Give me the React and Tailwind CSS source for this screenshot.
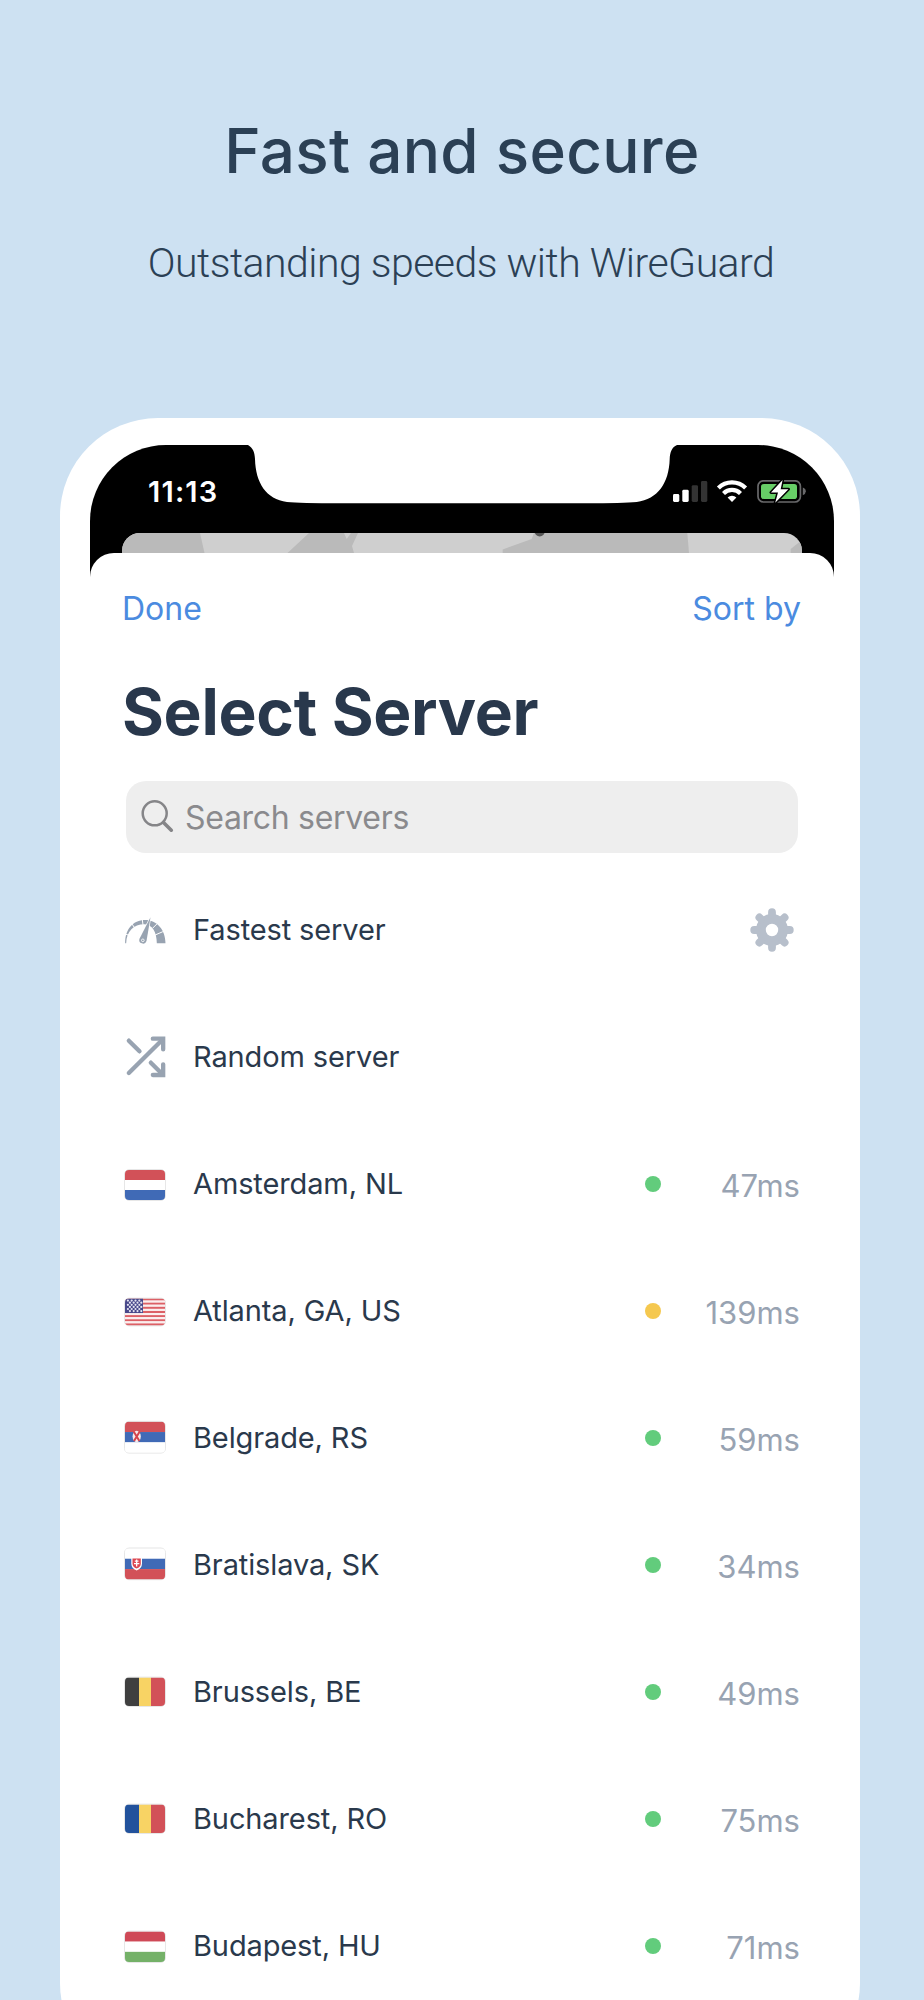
const servers = [
  { name: "Amsterdam, NL", flag: "nl", ping: 47 },
  { name: "Atlanta, GA, US", flag: "us", ping: 139 },
  { name: "Belgrade, RS", flag: "rs", ping: 59 },
  { name: "Bratislava, SK", flag: "sk", ping: 34 },
  { name: "Brussels, BE", flag: "be", ping: 49 },
  { name: "Bucharest, RO", flag: "ro", ping: 75 },
  { name: "Budapest, HU", flag: "hu", ping: 71 },
];

const flags = {
  nl: { y: 3, h: 30, rows: ["#d25158", "#ffffff", "#406ab6"] },
  us: { y: 4.5, h: 27, rows: [] },
  rs: { y: 0.7, h: 31, rows: ["#d25158", "#406ab6", "#ffffff"] },
  sk: { y: 0.4, h: 31, rows: ["#ffffff", "#406ab6", "#d25158"] },
  be: { y: 2.5, h: 28.5, cols: ["#3f3f3f", "#f8d364", "#d25158"] },
  ro: { y: 2.5, h: 28.5, cols: ["#22529c", "#f8d364", "#d25158"] },
  hu: { y: 2.5, h: 30.5, rows: ["#cf4957", "#ffffff", "#74b168"] },
};

const Flag = ({ code }) => {
  const { y, h, rows, cols } = flags[code];
  const clip = `flag-${code}`;
  return (
    <svg viewBox="0 0 40 34" className="w-10 h-[34px] shrink-0 overflow-visible">
      <clipPath id={clip}>
        <rect x="0" y={y} width="40" height={h} rx="4" />
      </clipPath>
      <rect x="-0.3" y={y - 0.3} width="40.6" height={h + 0.6} rx="4.3" fill="#fff" stroke="#dedede" strokeWidth="0.9" />
      <g clipPath={`url(#${clip})`}>
        {rows?.map((color, i) => (
          <rect key={i} x="0" y={y + (i * h) / 3} width="40" height={h / 3} fill={color} />
        ))}
        {cols?.map((color, i) => (
          <rect key={i} x={[0, 14, 26][i]} y={y} width={[14, 12, 14][i]} height={h} fill={color} />
        ))}
        {code === "us" && (
          <>
            {[...Array(13)].map((_, i) => (
              <rect key={i} x="0" y={y + (i * h) / 13} width="40" height={h / 13} fill={i % 2 ? "#fbeeee" : "#dc6066"} />
            ))}
            <rect x="0" y={y} width="18" height={(h * 7) / 13} fill="#48488a" />
            {[...Array(6)].map((_, r) =>
              [...Array(4)].map((_, c) => (
                <circle key={`${r}-${c}`} cx={(r % 2 ? 4.9 : 2.9) + c * 3.8} cy={y + 2.1 + r * 2.1} r="1.1" fill="#e4e4f0" />
              ))
            )}
          </>
        )}
      </g>
      {code === "rs" && (
        <g>
          <ellipse cx="11.7" cy="15.5" rx="4.1" ry="5.8" fill="#f8eaea" />
          <path d="M8.8 10.8L14.4 20M14.6 10.8L9 20" stroke="#d6434c" strokeWidth="2" />
        </g>
      )}
      {code === "sk" && (
        <g>
          <path d="M6.3 9.6H17V15.5Q17 20.4 11.6 22.6Q6.3 20.4 6.3 15.5Z" fill="#fff" />
          <path d="M7.5 10.4H15.8V15.4Q15.8 19 11.6 20.6Q7.5 19 7.5 15.4Z" fill="#dc4650" />
          <path d="M11.65 11.5V18.5M9.8 13.2H13.5M9 15.6H14.3" stroke="#fff" strokeWidth="1.3" />
        </g>
      )}
    </svg>
  );
};

const GaugeIcon = () => (
  <svg viewBox="46.5 78 120 84" className="w-10 h-7 shrink-0 overflow-visible">
    <path d="M47 160C46 118 71 90 106 90C143 90 168 120 168 160H142C142 126 128 103 104 103C73 103 51 124 50 160Z" fill="#98a3b1" />
    <path d="M45 131L58 136M66 100L75 113M98 86L101 108M147 97L129 115M160 125L137 135" stroke="#fff" strokeWidth="3" />
    <path d="M123 82L111 153A11 11 0 1 1 90 146Z" fill="#98a3b1" stroke="#fff" strokeWidth="4" strokeLinejoin="round" paintOrder="stroke" />
    <circle cx="100" cy="151" r="4" fill="#98a3b1" stroke="#fff" strokeWidth="2.5" />
  </svg>
);

const ShuffleIcon = () => (
  <svg viewBox="46.5 438 120 126" className="w-10 h-[42px] shrink-0 overflow-visible">
    <g fill="none" stroke="#98a3b1" strokeWidth="13" strokeLinecap="round">
      <path d="M58 452L90 484M58 549L160 448M124 518L158 552" />
      <path d="M130 446H161V478M130 555H161V523" />
    </g>
  </svg>
);

const GearIcon = () => (
  <svg viewBox="-22 -22 44 44" className="w-11 h-11 mr-[6px]">
    <circle r="11.1" fill="none" stroke="#b7bfcb" strokeWidth="9.8" />
    <path
      d="M0-17.8V-15M0 17.8V15M-17.8 0H-15M17.8 0H15M-12.6-12.6L-11-11M12.6-12.6L11-11M-12.6 12.6L-11 11M12.6 12.6L11 11"
      stroke="#b7bfcb"
      strokeWidth="7.8"
      strokeLinecap="round"
    />
  </svg>
);

const SearchIcon = () => (
  <svg viewBox="0 0 34 34" className="w-[34px] h-[34px]" fill="none" stroke="#858588" strokeLinecap="round">
    <circle cx="13.7" cy="13.3" r="12" strokeWidth="2.5" />
    <path d="M22.5 22.5L30.3 30.2" strokeWidth="3.6" />
  </svg>
);

const StatusIcons = () => (
  <svg viewBox="673 480 134 23" className="w-[134px] h-[23px]">
    <rect x="673" y="494" width="6.3" height="8" rx="1.4" fill="#fff" />
    <rect x="682.3" y="489.8" width="6.4" height="12.2" rx="1.4" fill="#fff" />
    <rect x="691.7" y="485.2" width="6.3" height="16.8" rx="1.4" fill="#333" />
    <rect x="701" y="481" width="6.3" height="21" rx="1.4" fill="#333" />
    {/* wifi */}
    <g fill="none" stroke="#fff" strokeWidth="4.2">
      <path d="M718.4 488A19.2 19.2 0 0 1 745.6 488" />
      <path d="M723.5 493.4A12 12 0 0 1 740.5 493.4" />
    </g>
    <path d="M727.6 497.6A6.4 6.4 0 0 1 736.4 497.6L732 502Z" fill="#fff" />
    {/* battery */}
    <rect x="758" y="480.8" width="42.4" height="21.2" rx="5.5" fill="none" stroke="#69696b" strokeWidth="1.7" />
    <path d="M802.8 487.5Q805.8 488.6 805.8 491.3T802.8 495.2Z" fill="#69696b" />
    <rect x="761" y="484" width="36" height="15" rx="2.8" fill="#67ce67" />
    <path d="M782.6 480L771 492.4H778L775.2 502.8L788.4 489.2H780.7Z" fill="#fff" stroke="#000" strokeWidth="3" strokeLinejoin="round" paintOrder="stroke" />
  </svg>
);

const MapStrip = () => (
  <svg viewBox="0 0 680 20" className="block w-[680px] h-5">
    <rect width="680" height="20" fill="#cfcfcf" />
    <g fill="#bababa">
      <path d="M0 0H78L82.5 20H0Z" />
      <path d="M187 0H222L224.7 6L229 0H236L230 13L232 20H165.5Z" />
      <path d="M412 0H565.3L567 20H380.7V16.5L409.7 6Z" />
      <path d="M680 7L668.7 16V20H680Z" />
    </g>
    <circle cx="417.7" cy="-1.5" r="5" fill="#555" />
  </svg>
);

const Row = ({ icon, label, children }) => (
  <li className="flex items-center h-[127px] pl-[35px] pr-[34px]">
    {icon}
    <span className="ml-[28px] flex-1 text-[29px] tracking-[-0.12px] text-[#2a394c]">{label}</span>
    {children}
  </li>
);

const App = () => {
  return (
    <div className="w-[924px] h-[2000px] overflow-hidden bg-[#cde1f2] font-['Inter',sans-serif]">
      <header className="h-[418px] pt-[106px] text-center text-[#2b4055]">
        <h1 className="text-[62px] leading-[90px] font-medium tracking-[0.3px]">Fast and secure</h1>
        <p className="mt-[37px] pr-[2px] text-[41px] leading-[60px] font-light tracking-[-0.53px] font-['Roboto',sans-serif]">
          Outstanding speeds with WireGuard
        </p>
      </header>

      <div className="ml-[60px] w-[800px] h-[1663px] rounded-[98px] bg-white pl-[30px] pr-[26px] pt-[27px]">
        <div className="rounded-t-[76px] overflow-hidden bg-[linear-gradient(#000_132px,#fff_132px)]">
          <div className="relative flex items-center justify-between h-[88px] pl-[58px] pr-[27px] pt-[5px]">
            <svg viewBox="0 0 744 59" className="absolute left-0 top-0 w-[744px] h-[59px]">
              <path
                d="M158 0C163 3 164.6 7 165 14C165.6 38 176 54 197 57Q210 58.2 250 58.3H496Q533 58.2 546.7 57C568 54 579 38 579.7 14C580 7 582 2 587 0Z"
                fill="#fff"
              />
            </svg>
            <span className="text-[29px] font-semibold tracking-[1.2px] text-white">11:13</span>
            <StatusIcons />
          </div>
          <div className="mx-[32px] rounded-t-[18px] overflow-hidden">
            <MapStrip />
          </div>

          <div className="rounded-t-[24px] bg-white">
            <div className="flex items-center justify-between h-[111px] pl-[32px] pr-[33px] text-[32px] text-[#4b8be0]">
              <button>Done</button>
              <button>Sort by</button>
            </div>
            <h2 className="h-[95px] pl-[32px] text-[64px] leading-[95px] font-bold tracking-[-0.3px] text-[#29384c]">
              Select Server
            </h2>
            <div className="mx-[36px] mt-[22px] h-[71.5px] rounded-[20px] bg-[#eeeeee] flex items-center pl-[15px]">
              <SearchIcon />
              <span className="ml-[10px] pt-[2px] text-[32px] tracking-[-0.3px] text-[#8a8a8d]">Search servers</span>
            </div>

            <ul className="mt-[14px]">
              <Row icon={<GaugeIcon />} label="Fastest server">
                <GearIcon />
              </Row>
              <Row icon={<ShuffleIcon />} label="Random server" />
              {servers.map((s) => (
                <Row key={s.name} icon={<Flag code={s.flag} />} label={s.name}>
                  <span className={`size-4 rounded-full ${s.ping > 100 ? "bg-[#f5c84f]" : "bg-[#62cc7c]"}`} />
                  <span className="w-[139px] pt-[4px] text-right text-[31px] text-[#98a3b2]">{s.ping}ms</span>
                </Row>
              ))}
            </ul>
          </div>
        </div>
      </div>
    </div>
  );
};

export default App;
